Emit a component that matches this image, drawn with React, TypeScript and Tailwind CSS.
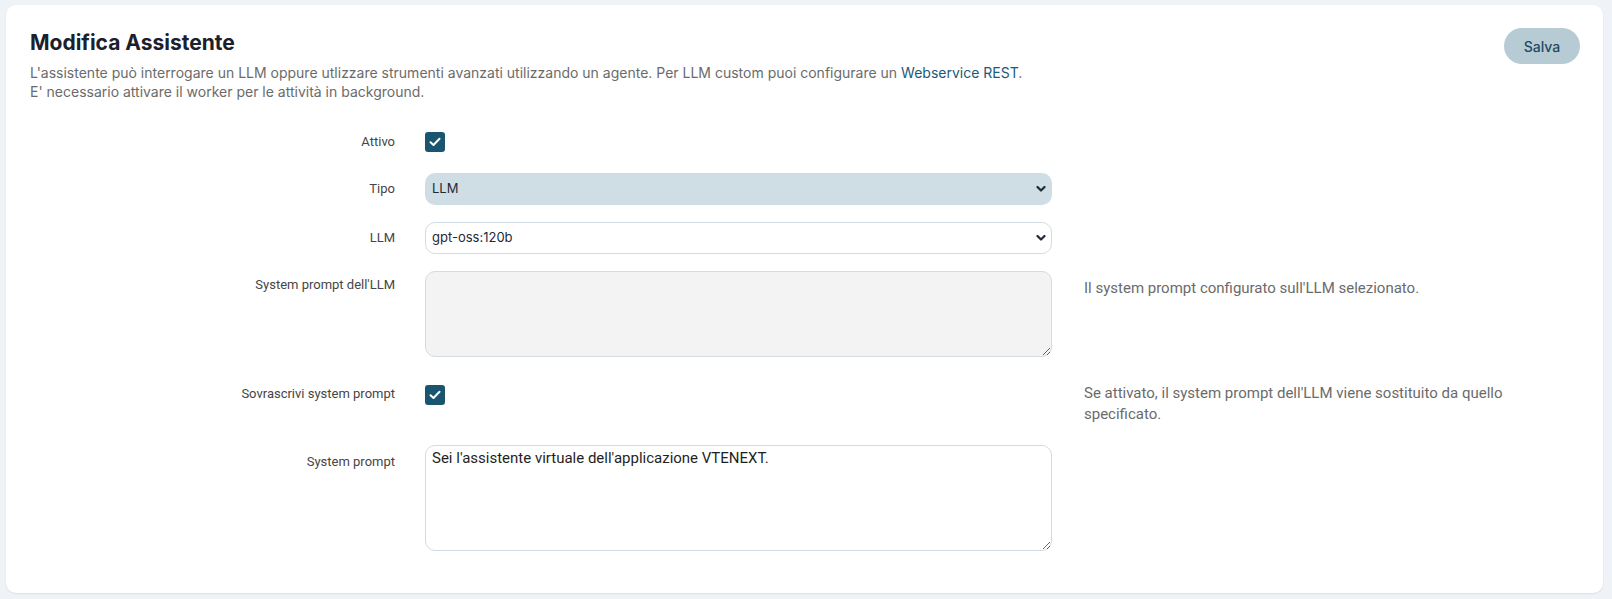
import React from "react";

const Check = () => (
  <div className="w-5 h-5 rounded-[3px] bg-[#1a5570] flex items-center justify-center">
    <svg width="12" height="10" viewBox="0 0 12 10" fill="none">
      <path d="M1.5 5.2 L4.5 8 L10.5 1.8" stroke="white" strokeWidth="2" strokeLinecap="round" strokeLinejoin="round" />
    </svg>
  </div>
);

const Chevron = () => (
  <svg width="10" height="7" viewBox="0 0 10 7" fill="none" className="absolute right-[6px] top-1/2 -translate-y-1/2 pointer-events-none">
    <path d="M1.5 1.5 L5 5 L8.5 1.5" stroke="#1f2937" strokeWidth="2.2" strokeLinecap="round" strokeLinejoin="round" />
  </svg>
);

const Label = ({ children, className = "" }: { children: React.ReactNode; className?: string }) => (
  <div className={"w-[365px] shrink-0 text-right text-[13px] text-[#454545] font-['Roboto',sans-serif] " + className}>{children}</div>
);

export default function App() {
  return (
    <div className="min-h-screen bg-[#eff2f6] pt-[5px] pl-[6px] pr-[9px] pb-[5px] font-['Inter',sans-serif]">
      <div className="bg-white rounded-[10px] shadow-[0_1px_2px_rgba(0,0,0,0.08)] pl-[24px] pr-[23px] pt-[24px] pb-[42px]">
        <div className="flex justify-between items-start">
          <div>
            <h1 className="text-[21px] leading-[28px] font-bold text-[#1a202c]">Modifica Assistente</h1>
            <p className="mt-[6px] text-[14px] leading-[19px] text-[#6b6b6b]">
              L'assistente può interrogare un LLM oppure utlizzare strumenti avanzati utilizzando un agente. Per LLM custom puoi configurare un{" "}
              <span className="text-[#1b5a7a]">Webservice REST</span>.
              <br />
              E' necessario attivare il worker per le attività in background.
            </p>
          </div>
          <button className="mt-[-1px] w-[76px] h-[36px] rounded-full bg-[#b7cbd4] text-[#1d4a66] text-[14px] font-medium">Salva</button>
        </div>

        <div className="mt-[31px] flex flex-col">
          {/* Attivo */}
          <div className="flex items-center gap-[30px] h-5">
            <Label>Attivo</Label>
            <Check />
          </div>

          {/* Tipo */}
          <div className="flex items-center gap-[30px] mt-[21px]">
            <Label>Tipo</Label>
            <div className="relative w-[627px]">
              <select className="appearance-none w-full h-[32px] rounded-[10px] bg-[#cfdee5] pl-[7px] text-[13px] text-[#1f2937] outline-none">
                <option>LLM</option>
              </select>
              <Chevron />
            </div>
          </div>

          {/* LLM */}
          <div className="flex items-center gap-[30px] mt-[17px]">
            <Label>LLM</Label>
            <div className="relative w-[627px]">
              <select className="appearance-none w-full h-[32px] rounded-[10px] bg-white border border-[#d3dbe3] pl-[6px] text-[13px] text-[#1f2937] outline-none">
                <option>gpt-oss:120b</option>
              </select>
              <Chevron />
            </div>
          </div>

          {/* System prompt dell'LLM */}
          <div className="flex items-start mt-[17px]">
            <Label className="pt-[6px] leading-[16px]">System prompt dell'LLM</Label>
            <textarea
              readOnly
              className="ml-[30px] w-[627px] h-[86px] rounded-[10px] bg-[#f3f3f3] border border-[#d3dbe3] outline-none"
            />
            <div className="ml-[32px] pt-[7px] text-[15px] leading-[20px] text-[#6b6b6b] font-['Roboto',sans-serif]">
              Il system prompt configurato sull'LLM selezionato.
            </div>
          </div>

          {/* Sovrascrivi */}
          <div className="flex items-start mt-[26px]">
            <Label className="pt-[3px] leading-[16px]">Sovrascrivi system prompt</Label>
            <div className="ml-[30px] w-[627px] pt-[2px]">
              <Check />
            </div>
            <div className="ml-[32px] w-[470px] text-[15px] leading-[21px] text-[#6b6b6b] font-['Roboto',sans-serif]">
              Se attivato, il system prompt dell'LLM viene sostituito da quello specificato.
            </div>
          </div>

          {/* System prompt */}
          <div className="flex items-start mt-[20px]">
            <Label className="pt-[9px] leading-[16px]">System prompt</Label>
            <textarea
              readOnly
              defaultValue="Sei l'assistente virtuale dell'applicazione VTENEXT."
              className="ml-[30px] w-[627px] h-[106px] rounded-[10px] bg-white border border-[#d3dbe3] outline-none px-[6px] py-[2px] text-[15px] leading-[20px] text-[#1f1f1f] font-['Roboto',sans-serif]"
            />
          </div>
        </div>
      </div>
    </div>
  );
}
